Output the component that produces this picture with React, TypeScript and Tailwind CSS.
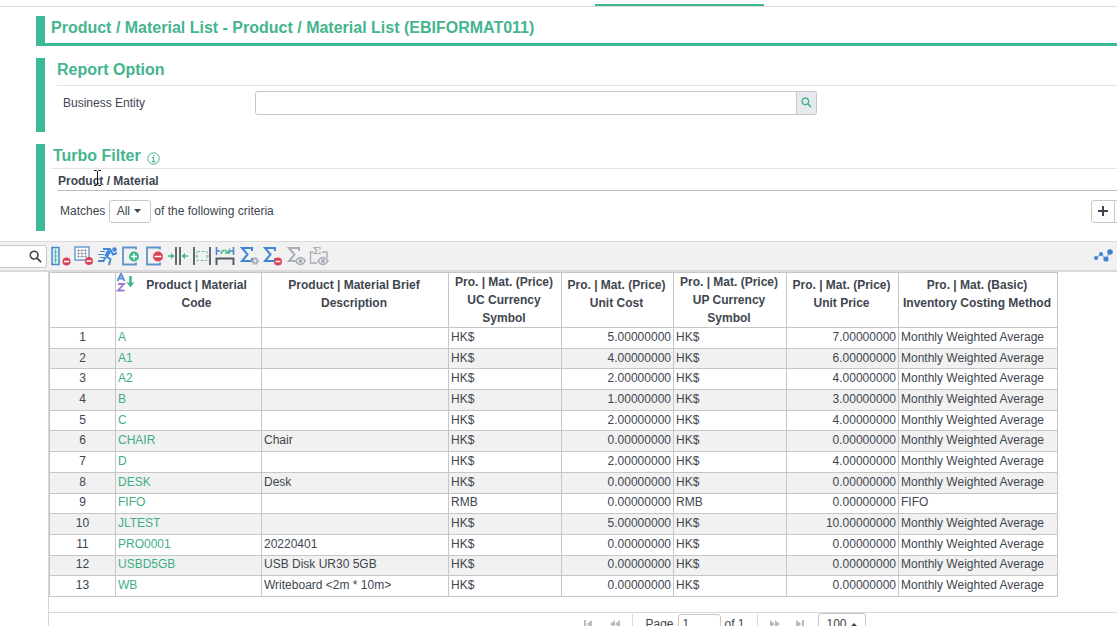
import React from "react";

const rows: string[][] = [
  ["A", "", "HK$", "5.00000000", "HK$", "7.00000000", "Monthly Weighted Average"],
  ["A1", "", "HK$", "4.00000000", "HK$", "6.00000000", "Monthly Weighted Average"],
  ["A2", "", "HK$", "2.00000000", "HK$", "4.00000000", "Monthly Weighted Average"],
  ["B", "", "HK$", "1.00000000", "HK$", "3.00000000", "Monthly Weighted Average"],
  ["C", "", "HK$", "2.00000000", "HK$", "4.00000000", "Monthly Weighted Average"],
  ["CHAIR", "Chair", "HK$", "0.00000000", "HK$", "0.00000000", "Monthly Weighted Average"],
  ["D", "", "HK$", "2.00000000", "HK$", "4.00000000", "Monthly Weighted Average"],
  ["DESK", "Desk", "HK$", "0.00000000", "HK$", "0.00000000", "Monthly Weighted Average"],
  ["FIFO", "", "RMB", "0.00000000", "RMB", "0.00000000", "FIFO"],
  ["JLTEST", "", "HK$", "5.00000000", "HK$", "10.00000000", "Monthly Weighted Average"],
  ["PRO0001", "20220401", "HK$", "0.00000000", "HK$", "0.00000000", "Monthly Weighted Average"],
  ["USBD5GB", "USB Disk UR30 5GB", "HK$", "0.00000000", "HK$", "0.00000000", "Monthly Weighted Average"],
  ["WB", "Writeboard <2m * 10m>", "HK$", "0.00000000", "HK$", "0.00000000", "Monthly Weighted Average"],
];

const headings: string[][] = [
  ["Product | Material Brief", "Description"],
  ["Pro. | Mat. (Price)", "UC Currency", "Symbol"],
  ["Pro. | Mat. (Price)", "Unit Cost"],
  ["Pro. | Mat. (Price)", "UP Currency", "Symbol"],
  ["Pro. | Mat. (Price)", "Unit Price"],
  ["Pro. | Mat. (Basic)", "Inventory Costing Method"],
];

function Svg({ children }: { children: React.ReactNode }) {
  return (
    <svg width="20" height="20" viewBox="0 0 20 20" fill="none" aria-hidden="true">
      {children}
    </svg>
  );
}

function Minus({ x, y, r = 4 }: { x: number; y: number; r?: number }) {
  return (
    <>
      <circle cx={x} cy={y} r={r} fill="#dc4257" />
      <path d={`M${x - r + 1.5} ${y}h${2 * r - 3}`} stroke="#fff" strokeWidth="1.5" />
    </>
  );
}

function Sigma({ color }: { color: string }) {
  return <path d="M13 5V2H3l5.500 6.500L3 15h10v-3" stroke={color} strokeWidth="2" />;
}

function Eye({ x, y }: { x: number; y: number }) {
  return (
    <>
      <path d={`M${x - 5} ${y}q5 -7 10 0q-5 7 -10 0z`} fill="#f1f1f1" stroke="#a9adb5" strokeWidth="1.4" />
      <circle cx={x} cy={y} r="2" fill="#a9adb5" />
    </>
  );
}

const tools: { label: string; icon: React.ReactNode }[] = [
  {
    label: "Remove column",
    icon: (
      <Svg>
        <rect x="1" y="1.500" width="7" height="17" fill="#d5eef2" stroke="#4a86c9" strokeWidth="1.500" />
        <path d="M4.500 3v14M3 6h3M3 10h3M3 14h3" stroke="#5bbcae" />
        <Minus x={15.5} y={15.5} />
      </Svg>
    ),
  },
  {
    label: "Remove grid",
    icon: (
      <Svg>
        <rect x="1" y="1" width="14" height="13" fill="#fff" stroke="#6e9bd6" strokeWidth="1.500" />
        <path d="M4.500 3v9M8 3v9M11.500 3v9M3 4.500h10M3 7.500h10M3 10.500h10" stroke="#a7adb5" />
        <Minus x={15} y={15} />
      </Svg>
    ),
  },
  {
    label: "Run",
    icon: (
      <Svg>
        <circle cx="16.500" cy="3.500" r="2.300" fill="#438ad9" />
        <path d="M11.500 4.500L8 10.500" stroke="#438ad9" strokeWidth="4" />
        <path d="M5 3h7l3 5.500 4-1.500M8 10.500l4.500 2.500-1.500 6M7.500 11L5.500 15H0" stroke="#438ad9" strokeWidth="2" strokeLinejoin="round" />
        <path d="M2 5.500h5M0 8.500h6M2 11.500h4" stroke="#438ad9" strokeWidth="1.200" />
      </Svg>
    ),
  },
  {
    label: "Add column",
    icon: (
      <Svg>
        <path d="M15 3.500v-2H2v17h13v-2" stroke="#6093d0" strokeWidth="1.800" />
        <circle cx="13" cy="10.500" r="5" fill="#3fb58c" />
        <path d="M10 10.500h6M13 7.500v6" stroke="#fff" strokeWidth="1.500" />
      </Svg>
    ),
  },
  {
    label: "Delete column",
    icon: (
      <Svg>
        <path d="M15 3.500v-2H2v17h13v-2" stroke="#6093d0" strokeWidth="1.800" />
        <Minus x={13} y={10.5} r={5} />
      </Svg>
    ),
  },
  {
    label: "Shrink column widths",
    icon: (
      <Svg>
        <path d="M8 1v18M12 1v18" stroke="#555b62" strokeWidth="1.800" />
        <path d="M0 10h5M20 10h-5" stroke="#45b58f" strokeWidth="1.500" />
        <path d="M3 7l3.500 3L3 13zM17 7l-3.500 3 3.500 3z" fill="#45b58f" />
      </Svg>
    ),
  },
  {
    label: "Fit column widths",
    icon: (
      <Svg>
        <path d="M2 1v18M18 1v18" stroke="#555b62" strokeWidth="1.800" />
        <rect x="5" y="5.500" width="10" height="9" stroke="#79c6a6" strokeDasharray="3 1.500" />
        <path d="M3 10h3M14 10h3" stroke="#79c6a6" />
      </Svg>
    ),
  },
  {
    label: "Fit row heights",
    icon: (
      <Svg>
        <path d="M1.500 1v8M18.500 1v8M2 5h3M15 5h3" stroke="#4b87cf" strokeWidth="1.600" />
        <path d="M1.500 19v-6.500h17V19" stroke="#555b62" strokeWidth="2" />
        <path d="M6 8q1-6 8-2M14.500 2.500V7H10" stroke="#45b58f" strokeWidth="1.400" />
      </Svg>
    ),
  },
  {
    label: "Sum settings",
    icon: (
      <Svg>
        <Sigma color="#4285d3" />
        <circle cx="16" cy="15" r="2.800" fill="#f1f1f1" stroke="#a5a9b0" strokeWidth="2" strokeDasharray="1.600 .6" />
        <circle cx="16" cy="15" r="2" stroke="#a5a9b0" />
      </Svg>
    ),
  },
  {
    label: "Remove sum",
    icon: (
      <Svg>
        <Sigma color="#4285d3" />
        <Minus x={16} y={15.5} />
      </Svg>
    ),
  },
  {
    label: "Show sum",
    icon: (
      <Svg>
        <Sigma color="#a9adb5" />
        <Eye x={14.5} y={15} />
      </Svg>
    ),
  },
  {
    label: "Show group sum",
    icon: (
      <Svg>
        <path d="M11 3.500V1.500H5l3 3-3 3h6V6" stroke="#a9adb5" strokeWidth="1.200" />
        <path d="M4 6H1.500v11H8M13 6h5v6" stroke="#a9adb5" strokeWidth="1.400" />
        <Eye x={14} y={15} />
      </Svg>
    ),
  },
];

function Search({ className }: { className: string }) {
  return (
    <svg className={className} viewBox="0 0 14 14" fill="none" stroke="currentColor" aria-hidden="true">
      <circle cx="5.500" cy="5.500" r="4.200" strokeWidth="1.700" />
      <path d="M8.500 8.500l4.500 4.500" strokeWidth="2" />
    </svg>
  );
}

function PagerButton({ label, d }: { label: string; d: string }) {
  return (
    <button type="button" aria-label={label} className="text-[#b9bcc1]">
      <svg width="10" height="8" viewBox="0 0 10 8" fill="currentColor" aria-hidden="true">
        <path d={d} />
      </svg>
    </button>
  );
}

export default function App() {
  return (
    <div className="flex h-screen flex-col overflow-hidden bg-white font-['Liberation_Sans',Arial,sans-serif] text-[12px] text-[#40464f]">
      <div className="flex h-[7px] shrink-0 items-end border-b border-[#dcdfdf]">
        <div className="ml-[595px] h-[2px] w-[169px] bg-[#3fb595]" />
      </div>

      <header className="mt-[9px] ml-9 flex h-[30px] shrink-0 items-start border-b-[3px] border-l-[9px] border-[#3cb996] pl-[6px]">
        <h1 className="text-[16px] leading-6 font-bold text-[#45b48f]">
          Product / Material List - Product / Material List (EBIFORMAT011)
        </h1>
      </header>

      <section className="mt-3 ml-9 h-[74px] shrink-0 border-l-[9px] border-[#3cb996] pl-3">
        <h2 className="h-[28px] border-b border-[#e2e2e2] text-[16px] leading-6 font-bold text-[#45b48f]">Report Option</h2>
        <div className="mt-[5px] flex items-center pl-[6px]">
          <label htmlFor="entity" className="w-[192px]">Business Entity</label>
          <div className="flex h-6 w-[562px]">
            <input id="entity" className="min-w-0 flex-1 rounded-l-[3px] border border-[#c8c8c8] px-2 outline-none" />
            <button type="button" aria-label="Search entity" className="flex w-5 items-center justify-center rounded-r-[3px] border border-l-0 border-[#c8c8c8] bg-[#e6eaee] pb-[2px] text-[#3fb58c]">
              <Search className="size-[11px]" />
            </button>
          </div>
        </div>
      </section>

      <section className="mt-3 ml-9 h-[87px] shrink-0 border-l-[9px] border-[#3cb996] pl-[6px]">
        <h2 className="flex h-[25px] items-center gap-[6px] border-b border-[#e2e2e2] pl-[2px] text-[16px] font-bold text-[#45b48f]">
          Turbo Filter
          <svg className="mt-1" width="13" height="13" viewBox="0 0 13 13" fill="none" stroke="#45b48f" aria-hidden="true">
            <circle cx="6.500" cy="6.500" r="5.700" />
            <path d="M5 5.500h1.500V10M4.800 9.700h3.600M6 3.500h1.300" strokeWidth="1.200" />
          </svg>
        </h2>
        <div className="relative ml-[7px] h-[22px] border-b border-[#b9bcc0]">
          <h3 className="text-[12px] leading-6 font-bold">Product / Material</h3>
          <svg className="absolute top-0 left-[35px]" width="9" height="18" viewBox="0 0 9 18" fill="none" stroke="#111" aria-hidden="true">
            <path d="M1 1.500h2.500l1 1 1-1H8M4.500 2.500v13M1 16.500h2.500l1-1 1 1H8" />
          </svg>
        </div>
        <div className="mt-[9px] flex items-center pl-[9px]">
          <span className="pb-[2px]">Matches</span>
          <button type="button" className="mr-[3px] ml-1 flex h-[23px] w-[42px] items-center justify-center gap-1 rounded-[3px] border border-[#c8c8c8] pr-[3px] pb-px">
            All
            <svg width="7" height="4" viewBox="0 0 7 4" fill="currentColor" aria-hidden="true">
              <path d="M0 0h7L3.500 4z" />
            </svg>
          </button>
          <span className="pb-[2px]">of the following criteria</span>
          <div className="ml-auto flex h-[23px]">
            <button type="button" aria-label="Add criterion" className="flex w-6 items-center justify-center rounded-l-[3px] border border-[#c8c8c8] pb-[2px]">
              <svg width="10" height="10" viewBox="0 0 10 10" stroke="currentColor" strokeWidth="2" aria-hidden="true">
                <path d="M5 0v10M0 5h10" />
              </svg>
            </button>
            <div className="w-[2px] border-y border-[#c8c8c8]" />
          </div>
        </div>
      </section>

      <div className="mt-[10px] flex h-[31px] shrink-0 items-center border-t border-b-2 border-[#dadada] bg-[#f1f1f1]">
        <label className="flex h-[23px] w-[47px] items-center rounded-r-[3px] border border-l-0 border-[#c8c8c8] bg-white pr-1">
          <input aria-label="Search fields" className="min-w-0 flex-1 outline-none" />
          <Search className="size-[13px]" />
        </label>
        <div className="ml-1 flex w-[278px] justify-between">
          {tools.map((t) => (
            <button key={t.label} type="button" aria-label={t.label} className="flex size-5 items-center justify-center">
              {t.icon}
            </button>
          ))}
        </div>
        <button type="button" aria-label="Chart" className="mr-1 ml-auto">
          <Svg>
            <path d="M3 12l5-4 5 5 4-7" stroke="#8fb4e2" strokeWidth="1.200" />
            <circle cx="3" cy="12" r="2" fill="#3f82d3" />
            <circle cx="8" cy="8" r="2" fill="#3f82d3" />
            <circle cx="13" cy="13" r="2.600" fill="#3f82d3" />
            <circle cx="17" cy="6" r="2.800" fill="#3f82d3" />
          </Svg>
        </button>
      </div>

      <div className="ml-12 flex min-h-0 flex-1 flex-col border-l border-[#d5d5d5]">
        <table className="h-[325px] w-[1008px] shrink-0 table-fixed border-collapse">
          <colgroup>
            <col className="w-[66px]" />
            <col className="w-[146px]" />
            <col className="w-[187px]" />
            <col className="w-[113px]" />
            <col className="w-[112px]" />
            <col className="w-[113px]" />
            <col className="w-[112px]" />
            <col className="w-[159px]" />
          </colgroup>
          <thead>
            <tr className="h-[55px] align-top leading-[18px]">
              <th className="border border-[#c6c6c6] p-0" aria-label="Row" />
              <th className="border border-[#c6c6c6] p-0">
                <div className="flex">
                  <svg width="18" height="20" viewBox="0 0 18 20" fill="none" aria-hidden="true">
                    <path d="M1.500 8L5 0.500L8.500 8M2.700 5.500h4.600" stroke="#5b8fd6" strokeWidth="1.800" />
                    <path d="M2 11h6l-6 6.500h6.500" stroke="#9a7bd0" strokeWidth="1.800" />
                    <path d="M14.500 3v10" stroke="#3fb58c" strokeWidth="2.500" />
                    <path d="M10 8.500l4.500 6 4.500-6-4.500 2z" fill="#3fb58c" />
                  </svg>
                  <span className="flex-1 pt-[3px] pr-[2px]">
                    Product | Material
                    <br />
                    Code
                  </span>
                </div>
              </th>
              {headings.map((lines, i) => (
                <th key={i} className={lines.length === 3 ? "border border-[#c6c6c6] p-0 pr-[2px]" : "border border-[#c6c6c6] p-0 pt-[3px] pr-[2px]"}>
                  {lines.map((l) => (
                    <div key={l} className="whitespace-nowrap">{l}</div>
                  ))}
                </th>
              ))}
            </tr>
          </thead>
          <tbody>
            {rows.map((r, i) => (
              <tr key={r[0]} className="leading-4 even:bg-[#f1f1f1]">
                <td className="border border-[#c6c6c6] p-0 pb-[2px] text-center">{i + 1}</td>
                {r.map((c, j) => (
                  <td
                    key={j}
                    className={
                      j === 3 || j === 5
                        ? "border border-[#c6c6c6] px-[2px] pt-0 pb-[2px] text-right"
                        : "border border-[#c6c6c6] px-[2px] pt-0 pb-[2px] whitespace-nowrap"
                    }
                  >
                    {j === 0 ? <a href="#" className="text-[#3fae87]">{c}</a> : c}
                  </td>
                ))}
              </tr>
            ))}
          </tbody>
        </table>

        <footer className="mt-[15px] flex h-8 shrink-0 items-start justify-center border-t border-[#dadada] pl-[284px]">
          <div className="flex h-[22px] items-center">
            <PagerButton label="First page" d="M0 0h2v8H0zM8 0v8L2.500 4z" />
            <div className="w-4" />
            <PagerButton label="Previous page" d="M5 0v8L0 4zM10 0v8L5 4z" />
            <div className="mx-3 h-5 w-px bg-[#dadada]" />
            <label htmlFor="page">Page</label>
            <input id="page" defaultValue="1" className="mx-1 h-[20px] w-[43px] rounded-[3px] border border-[#c8c8c8] px-1 outline-none" />
            <span>of 1</span>
            <div className="mx-3 h-5 w-px bg-[#dadada]" />
            <PagerButton label="Next page" d="M0 0v8l5-4zM5 0v8l5-4z" />
            <div className="w-4" />
            <PagerButton label="Last page" d="M0 0v8l5.500-4zM6 0h2v8H6z" />
            <button type="button" className="ml-3 flex h-[22px] w-12 items-center justify-center gap-1 rounded-[3px] border border-[#c8c8c8]">
              100
              <svg width="6" height="3" viewBox="0 0 6 3" fill="currentColor" aria-hidden="true">
                <path d="M3 0l3 3H0z" />
              </svg>
            </button>
          </div>
        </footer>
      </div>
    </div>
  );
}
